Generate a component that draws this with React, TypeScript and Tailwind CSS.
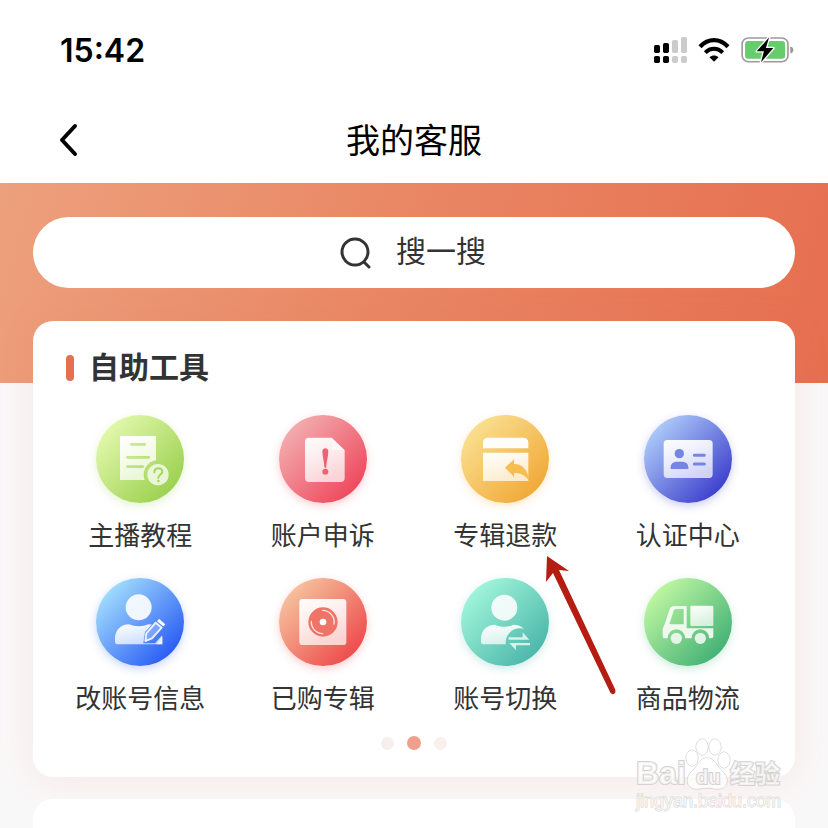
import * as React from "react"

type Tool = {
  id: string
  label: string
  from: string
  to: string
  art: React.ReactNode
  pointer?: boolean
}

const tools: Tool[] = [
  {
    id: "guide",
    label: "主播教程",
    from: "#e6fab0",
    to: "#98cf4c",
    art: (
      <>
        <mask id="guide-cut">
          <rect width="264" height="264" fill="#fff" />
          <circle cx="186" cy="179" r="43" fill="#000" />
          <path d="M180 128v20h40v-40z" fill="#000" />
          <path d="M106 88h40M94 127h64M94 155h46" stroke="#000" strokeWidth="8" strokeLinecap="round" />
        </mask>
        <path d="M72 63h108v132H72z" fill="url(#sheet)" mask="url(#guide-cut)" />
        <circle cx="186" cy="179" r="32" fill="#fff" fillOpacity="0.75" />
        <path d="M175 172c0-16 24-16 24-2 0 9-12 8-12 18" fill="none" stroke="#a3d65c" strokeWidth="6" strokeLinecap="round" />
        <circle cx="187" cy="198" r="4" fill="#a3d65c" />
      </>
    ),
  },
  {
    id: "appeal",
    label: "账户申诉",
    from: "#f3b3b4",
    to: "#ee4459",
    art: (
      <>
        <path d="M90 68h68l39 38v83a12 12 0 0 1-12 12H90a12 12 0 0 1-12-12V80a12 12 0 0 1 12-12z" fill="url(#sheet)" />
        <path d="M158 68l39 38h-29a10 10 0 0 1-10-10z" fill="#fff" fillOpacity="0.5" />
        <path d="M130 109c0-12 18-12 18 0 0 14-5 30-6 46-1 5-5 5-6 0-1-16-6-32-6-46z" fill="#ec6473" />
        <circle cx="139" cy="170" r="9" fill="#ec6473" />
      </>
    ),
  },
  {
    id: "refund",
    label: "专辑退款",
    from: "#fae395",
    to: "#f1a634",
    pointer: true,
    art: (
      <>
        <path d="M66 100V82a14 14 0 0 1 14-14h108a14 14 0 0 1 14 14v18z" fill="#fff" fillOpacity="0.96" />
        <path d="M66 113h136v85H66z" fill="url(#sheet)" />
        <path d="M132 158l27-25v14c26 0 42 18 46 51-12-16-24-24-46-24v12z" fill="#f6bd50" />
      </>
    ),
  },
  {
    id: "verify",
    label: "认证中心",
    from: "#b4d3fb",
    to: "#3839cb",
    art: (
      <>
        <rect x="59" y="75" width="147" height="114" rx="11" fill="url(#sheet)" />
        <g fill="#7585e2">
          <circle cx="106" cy="116" r="14" />
          <path d="M80 162v-5a17 17 0 0 1 17-17h19a17 17 0 0 1 17 17v5z" />
          <path d="M151 121h30M151 147h30" stroke="#7585e2" strokeWidth="9" strokeLinecap="round" />
        </g>
      </>
    ),
  },
  {
    id: "profile",
    label: "改账号信息",
    from: "#a8e4fd",
    to: "#2456f4",
    art: (
      <>
        <mask id="profile-cut">
          <rect width="264" height="264" fill="#fff" />
          <path d="M142 196l5-34 40-44 34 28-44 50z" fill="#000" />
        </mask>
        <circle cx="128" cy="88" r="39" fill="#fff" fillOpacity="0.9" />
        <path
          d="M57 192v-10c0-26 18-43 42-43 16 8 42 8 58 0 26 0 42 18 42 43v17H64a7 7 0 0 1-7-7z"
          fill="url(#sheet)"
          mask="url(#profile-cut)"
        />
        <path d="M151 166l28-32 18 15-29 32-20 8z" fill="#fff" fillOpacity="0.25" stroke="#fff" strokeOpacity="0.85" strokeWidth="6" strokeLinejoin="round" />
        <path d="M186 126l19 16" stroke="#fff" strokeWidth="9" />
        <path d="M182 199h17v-24z" fill="#fff" fillOpacity="0.65" />
      </>
    ),
  },
  {
    id: "albums",
    label: "已购专辑",
    from: "#f6c9a3",
    to: "#ed4548",
    art: (
      <>
        <rect x="61" y="63" width="141" height="138" rx="10" fill="url(#sheet)" />
        <circle cx="132" cy="132" r="44" fill="#ee7467" />
        <circle cx="132" cy="132" r="10" fill="#fff" />
        <path d="M131 97a35 35 0 0 1 34 41M97 130a35 35 0 0 0 34 37" fill="none" stroke="#fff" strokeOpacity="0.8" strokeWidth="4" strokeLinecap="round" />
      </>
    ),
  },
  {
    id: "switch",
    label: "账号切换",
    from: "#a6f9dd",
    to: "#48b4a8",
    art: (
      <>
        <mask id="switch-cut">
          <rect width="264" height="264" fill="#fff" />
          <circle cx="177" cy="194" r="43" fill="#000" />
        </mask>
        <circle cx="130" cy="89" r="39" fill="#fff" fillOpacity="0.88" />
        <path
          d="M60 192v-10c0-26 18-42 42-42 16 8 40 8 56 0 24 0 40 16 42 40v19H67a7 7 0 0 1-7-7z"
          fill="url(#sheet)"
          mask="url(#switch-cut)"
        />
        <path d="M143 178h42v-15l20 22h-62zM207 202h-42v15l-20-22h62z" fill="#fff" fillOpacity="0.75" />
      </>
    ),
  },
  {
    id: "shipping",
    label: "商品物流",
    from: "#c6fba4",
    to: "#3dae74",
    art: (
      <>
        <mask id="shipping-cut">
          <rect width="264" height="264" fill="#fff" />
          <path d="M96 93h23v46H76l12-38c1-5 3-8 8-8z" fill="#000" />
          <circle cx="97" cy="180" r="26" fill="#000" />
          <circle cx="169" cy="180" r="26" fill="#000" />
        </mask>
        <path
          d="M92 84h36v67h80v24a6 6 0 0 1-6 6H62a6 6 0 0 1-6-6v-20c0-6 4-10 6-17l14-42c3-9 7-12 16-12z"
          fill="#fff"
          fillOpacity="0.86"
          mask="url(#shipping-cut)"
        />
        <rect x="139" y="83" width="69" height="61" rx="4" fill="url(#sheet)" />
        <circle cx="97" cy="181" r="17" fill="#fff" fillOpacity="0.8" />
        <circle cx="169" cy="181" r="17" fill="#fff" fillOpacity="0.8" />
      </>
    ),
  },
]

function StatusBar() {
  return (
    <div className="flex h-[100px] items-center justify-between pl-[60px] pr-[34px]">
      <time className="pt-0.5 font-['Inter',sans-serif] text-[32px] font-semibold leading-10">15:42</time>
      <div className="flex items-center gap-[11px]">
        <svg viewBox="105 51 99 78" className="h-[26px] w-[33px]" aria-hidden="true">
          <g fill="#000">
            <rect x="105" y="75" width="18" height="24" rx="5" />
            <rect x="132" y="69" width="18" height="30" rx="5" />
            <rect x="105" y="108" width="18" height="21" rx="5" />
            <rect x="132" y="108" width="18" height="21" rx="5" />
          </g>
          <g fill="#cbcbcb">
            <rect x="159" y="60" width="18" height="39" rx="5" />
            <rect x="186" y="51" width="18" height="48" rx="5" />
            <rect x="159" y="108" width="18" height="21" rx="6" />
            <rect x="186" y="108" width="18" height="21" rx="6" />
          </g>
        </svg>
        <svg viewBox="239 50 96 74" className="h-6 w-8" fill="none" stroke="#000" aria-hidden="true">
          <path d="M244 77c25-27 61-27 86 0" strokeWidth="13" />
          <path d="M260 95c16-16 38-16 54 0" strokeWidth="12" />
          <path d="M273 109c8-7 20-7 28 0l-14 14z" fill="#000" stroke="none" />
        </svg>
        <svg viewBox="362 49 162 80" className="h-[26px] w-[53px]" aria-hidden="true">
          <rect x="365" y="52" width="141" height="73" rx="19" fill="#fff" stroke="#9b9b9b" strokeWidth="5" />
          <rect x="374" y="61" width="123" height="55" rx="10" fill="#65cd6b" />
          <path d="M513 78c13 3 13 18 0 22z" fill="#9b9b9b" />
          <path
            d="M448 50l-38 43h22l-9 34 38-44h-23z"
            fill="#000"
            stroke="#fff"
            strokeWidth="8"
            strokeLinejoin="round"
            paintOrder="stroke"
          />
        </svg>
      </div>
    </div>
  )
}

function ToolIcon({ tool }: { tool: Tool }) {
  return (
    <span
      className="block size-[88px] rounded-full"
      style={{ boxShadow: `0 3px 8px ${tool.to}40` }}
    >
      <svg viewBox="0 0 264 264" className="size-full" aria-hidden="true">
        <defs>
          <linearGradient id={`bg-${tool.id}`} x1="0.08" y1="0.1" x2="0.9" y2="0.9">
            <stop offset="0" stopColor={tool.from} />
            <stop offset="1" stopColor={tool.to} />
          </linearGradient>
        </defs>
        <circle cx="132" cy="132" r="132" fill={`url(#bg-${tool.id})`} />
        {tool.art}
      </svg>
    </span>
  )
}

function Pointer() {
  return (
    <svg
      viewBox="0 0 80 145"
      className="pointer-events-none absolute left-[127px] top-[138px] z-10 h-[145px] w-20"
      aria-hidden="true"
    >
      <path d="M6 3l22 15-10-1 56 119c2 5-3 7-5 3L12 20 5 29z" fill="#b51c12" />
    </svg>
  )
}

function Watermark() {
  return (
    <svg
      viewBox="0 0 156 76"
      className="pointer-events-none absolute bottom-4 right-[40px] h-[76px] w-[156px]"
      fill="#fff"
      fillOpacity="0.7"
      stroke="#d6d2d2"
      paintOrder="stroke"
      strokeWidth="2"
    >
      <g strokeWidth="1" stroke="#cdc9c9">
        <ellipse cx="60" cy="22" rx="6" ry="8" />
        <ellipse cx="70" cy="11" rx="6" ry="8" />
        <ellipse cx="83" cy="11" rx="6" ry="8" />
        <ellipse cx="92" cy="24" rx="6" ry="8" />
        <path d="M75 22c8 0 10 8 15 13 9 8 5 18-4 18-5 0-7-1-11-1s-6 1-11 1c-9 0-12-10-4-18 6-5 7-13 15-13z" />
      </g>
      <g className="font-['Liberation_Sans',sans-serif] font-bold">
        <text x="4" y="48" fontSize="32">Bai</text>
        <text x="64" y="48" fontSize="20">du</text>
      </g>
      <text x="98" y="47" fontSize="25" className="font-['Noto_Sans_CJK_SC',sans-serif] font-bold">经验</text>
      <text x="4" y="71" fontSize="18" strokeWidth="1" className="font-['Liberation_Sans',sans-serif]">jingyan.baidu.com</text>
    </svg>
  )
}

export default function App() {
  return (
    <div className="relative flex min-h-screen flex-col overflow-hidden bg-[#f9f8f8] font-['Liberation_Sans','Noto_Sans_CJK_SC',sans-serif] text-[#333]">
      {/* shared fade for the white parts of every icon */}
      <svg className="absolute size-0" aria-hidden="true">
        <defs>
          <linearGradient id="sheet" x1="0" y1="0" x2="0.3" y2="1">
            <stop offset="0" stopColor="#fff" stopOpacity="0.97" />
            <stop offset="1" stopColor="#fff" stopOpacity="0.72" />
          </linearGradient>
        </defs>
      </svg>

      <header className="bg-white text-black">
        <StatusBar />
        <div className="grid h-[83px] grid-cols-[1fr_auto_1fr] items-start pt-4">
          <button type="button" aria-label="返回" className="ml-[56px] flex h-12 w-8 items-center">
            <svg viewBox="0 0 26 36" className="h-9 w-[26px]" fill="none" stroke="currentColor" strokeWidth="4" strokeLinecap="round" strokeLinejoin="round" aria-hidden="true">
              <path d="M19 4L6 18l13 14" />
            </svg>
          </button>
          <h1 className="text-[34px] leading-[50px]">我的客服</h1>
        </div>
      </header>

      <main className="flex flex-1 flex-col bg-[linear-gradient(105deg,#eda07d,#e98562_50%,#e66f50)] bg-[length:100%_200px] bg-no-repeat px-[33px] pt-[34px]">
        <label className="flex h-[71px] items-center justify-center gap-6 rounded-full bg-white">
          <svg viewBox="0 0 32 32" className="size-8" fill="none" stroke="#333" strokeWidth="3" strokeLinecap="round" aria-hidden="true">
            <circle cx="15" cy="15" r="13" />
            <path d="M24 25l5 5" />
          </svg>
          <input
            type="text"
            aria-label="搜一搜"
            placeholder="搜一搜"
            className="w-[92px] bg-transparent pb-0.5 text-[30px] leading-10 outline-none placeholder:text-[#333]"
          />
        </label>

        <section className="mt-[33px] rounded-[20px] bg-white px-4 pb-[27px] pt-[25px] shadow-[0_4px_36px_rgba(226,120,100,0.12)]">
          <div className="mb-[25px] flex items-center gap-[15px] pl-[17px]">
            <span className="h-[26px] w-2 rounded-full bg-[#e76f51]" />
            <h2 className="text-[30px] font-bold leading-11">自助工具</h2>
          </div>

          <ul className="grid grid-cols-4 gap-y-6">
            {tools.map((tool) => (
              <li key={tool.id} className="relative flex justify-center">
                <button type="button" className="flex flex-col items-center gap-[15px]">
                  <ToolIcon tool={tool} />
                  <span className="whitespace-nowrap text-[26px] leading-9">{tool.label}</span>
                </button>
                {tool.pointer && <Pointer />}
              </li>
            ))}
          </ul>

          <div className="mt-[19px] flex items-center justify-center gap-[13px]">
            <span className="size-[13px] rounded-full bg-[#f7efec]" />
            <span className="size-[14px] rounded-full bg-[#efa08d]" />
            <span className="size-[13px] rounded-full bg-[#f9efeb]" />
          </div>
        </section>

        <section className="mt-[22px] flex-1 rounded-t-[20px] bg-white" />
      </main>

      <Watermark />
    </div>
  )
}
